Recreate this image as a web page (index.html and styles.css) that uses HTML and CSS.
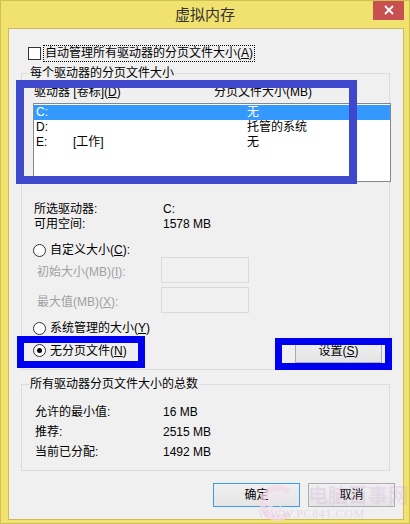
FILE: index.html
```html
<!DOCTYPE html>
<html lang="zh-CN">
<head>
<meta charset="utf-8">
<title>虚拟内存</title>
<link rel="stylesheet" href="styles.css">
</head>
<body>
<div class="window">
  <div class="titlebar">
    <span></span>
    <span class="title">虚拟内存</span>
    <span class="close-wrap">
      <span class="close">
        <svg width="10" height="10" viewBox="0 0 10 10"><path d="M1 1 L9 9 M9 1 L1 9" stroke="#fff" stroke-width="1.8" fill="none"/></svg>
      </span>
    </span>
  </div>
  <div class="client">
    <div class="auto-row">
      <span class="checkbox"></span>
      <span class="focus-label">自动管理所有驱动器的分页文件大小(<u>A</u>)</span>
    </div>

    <div class="group group1">
      <div class="legend">每个驱动器的分页文件大小</div>
      <div class="list-header"><span>驱动器 [卷标](<u>D</u>)</span><span>分页文件大小(MB)</span></div>
      <div class="listview">
        <div class="lv-row selected"><span>C:</span><span></span><span>无</span></div>
        <div class="lv-row"><span>D:</span><span></span><span>托管的系统</span></div>
        <div class="lv-row"><span>E:</span><span>[工作]</span><span>无</span></div>
      </div>
      <div class="info">
        <div class="info-row"><span>所选驱动器:</span><span>C:</span></div>
        <div class="info-row"><span>可用空间:</span><span>1578 MB</span></div>
      </div>
      <div class="radio-row radio-custom">
        <span class="radio"></span><span>自定义大小(<u>C</u>):</span>
      </div>
      <div class="size-row">
        <span class="lbl">初始大小(MB)(<u>I</u>):</span><span class="size-input"></span>
      </div>
      <div class="size-row second">
        <span class="lbl">最大值(MB)(<u>X</u>):</span><span class="size-input"></span>
      </div>
      <div class="radio-row radio-sys">
        <span class="radio"></span><span>系统管理的大小(<u>Y</u>)</span>
      </div>
      <div class="bottom-row">
        <div class="radio-row">
          <span class="radio checked"></span><span>无分页文件(<u>N</u>)</span>
        </div>
        <span class="btn">设置(<u>S</u>)</span>
      </div>
    </div>

    <div class="group group2">
      <div class="legend">所有驱动器分页文件大小的总数</div>
      <div class="totals">
        <div class="total-row"><span>允许的最小值:</span><span>16 MB</span></div>
        <div class="total-row"><span>推荐:</span><span>2515 MB</span></div>
        <div class="total-row"><span>当前已分配:</span><span>1492 MB</span></div>
      </div>
    </div>

    <div class="dialog-buttons">
      <span class="btn dlg default">确定</span>
      <span class="btn dlg">取消</span>
    </div>
  </div>

  <div class="mark mark-a"></div>
  <div class="mark mark-b"></div>
  <div class="mark mark-c"></div>

  <div class="wm-logo">
    <svg width="44" height="38" viewBox="0 0 44 38">
      <path d="M34 9 A15 15 0 1 0 34 29" stroke="#f4d9e8" stroke-width="6" fill="none"/>
      <path d="M27 15 A7 7 0 1 0 27 23" stroke="#f6e2ee" stroke-width="4" fill="none"/>
    </svg>
  </div>
  <div class="wm-text">电脑百事网</div>
  <div class="wm-url">WWW.PC841.COM</div>
</div>
</body>
</html>
```

FILE: styles.css
```css
* { box-sizing: border-box; }
html, body { margin: 0; padding: 0; }
body {
  font-family: "Liberation Sans", "Noto Sans CJK SC", sans-serif;
  font-size: 12px;
  color: #000;
}
u { text-decoration: underline; text-underline-offset: 1px; }

.window {
  position: relative;
  width: 410px;
  height: 524px;
  background: #f1e26f;
  border: 1px solid #d0bf52;
  display: flex;
  flex-direction: column;
  overflow: hidden;
}

.titlebar {
  height: 27px;
  flex: none;
  display: grid;
  grid-template-columns: 1fr auto 1fr;
  align-items: start;
}
.title {
  font-size: 15px;
  line-height: 27px;
  color: #333;
}
.close-wrap {
  display: flex;
  justify-content: flex-end;
  padding-right: 5px;
}
.close {
  width: 31px;
  height: 20px;
  margin-top: -1px;
  background: #c75050;
  display: flex;
  align-items: center;
  justify-content: center;
}

.client {
  flex: 1;
  margin: 0 5px 3px 7px;
  background: #f0f0f0;
  border: 1px solid #cdbc55;
}

.auto-row {
  display: flex;
  align-items: center;
  height: 17px;
  margin-top: 16px;
  padding-left: 19px;
}
.checkbox {
  width: 13px;
  height: 13px;
  border: 1px solid #333;
  background: #fff;
}
.focus-label {
  margin-left: 2px;
  height: 17px;
  line-height: 15px;
  padding: 0 1px;
  border: 1px dotted #000;
}

.group {
  border: 1px solid #dcdcdc;
  margin-left: 12px;
  margin-right: 13px;
}
.group1 { margin-top: 11px; padding-bottom: 6px; }
.group2 { margin-top: 14px; padding-bottom: 8px; }

.legend {
  display: block;
  width: max-content;
  margin: -8px 0 0 7px;
  padding: 0 1px;
  height: 14px;
  line-height: 14px;
  background: #f0f0f0;
}

.list-header {
  display: grid;
  grid-template-columns: 180px auto;
  margin-top: 5px;
  padding-left: 12px;
  height: 14px;
  line-height: 14px;
}
.listview {
  margin: 4px 0 0 11px;
  width: 358px;
  height: 79px;
  border: 1px solid #828790;
  background: #fff;
  padding-top: 1px;
}
.lv-row {
  display: grid;
  grid-template-columns: 37px 174px 1fr;
  height: 15px;
  line-height: 15px;
  padding-left: 2px;
}
.lv-row.selected { background: #3399ff; color: #fff; }

.info { margin-top: 20px; padding-left: 12px; }
.info-row {
  display: grid;
  grid-template-columns: 129px auto;
  height: 15px;
  line-height: 15px;
}

.radio-row {
  display: flex;
  align-items: center;
  gap: 4px;
  height: 14px;
  line-height: 14px;
}
.radio-custom { margin-top: 11px; padding-left: 11px; }
.radio-sys { margin-top: 8px; padding-left: 11px; }
.radio {
  width: 13px;
  height: 13px;
  border: 1px solid #333;
  border-radius: 50%;
  background: #fff;
  display: flex;
  align-items: center;
  justify-content: center;
}
.radio.checked::after {
  content: "";
  width: 5px;
  height: 5px;
  border-radius: 50%;
  background: #000;
}

.size-row {
  display: flex;
  align-items: center;
  height: 26px;
  padding-left: 15px;
  color: #a0a0a0;
}
.size-row.second { margin-top: 4px; }
.size-row .lbl { width: 124px; }
.size-input {
  width: 88px;
  height: 26px;
  border: 1px solid #d9d9d9;
  background: #f0f0f0;
}

.bottom-row {
  display: flex;
  justify-content: space-between;
  align-items: center;
  height: 25px;
  margin-top: 3px;
  padding: 0 7px 0 11px;
}

.btn {
  width: 87px;
  height: 25px;
  border: 1px solid #acacac;
  background: linear-gradient(#f0f0f0, #e5e5e5);
  display: flex;
  align-items: center;
  justify-content: center;
  line-height: 14px;
}
.btn.dlg { height: 24px; }
.btn.default { border-color: #3c9cf0; }

.totals { margin-top: 11px; padding-left: 13px; }
.total-row {
  display: grid;
  grid-template-columns: 128px auto;
  height: 20px;
  line-height: 20px;
}

.dialog-buttons {
  display: flex;
  justify-content: flex-end;
  gap: 8px;
  margin-top: 12px;
  padding-right: 8px;
}

/* annotation rectangles drawn over the dialog */
.mark { position: absolute; }
.mark-a {
  left: 15px; top: 79px;
  width: 341px; height: 104px;
  border: 8px solid #3f48cc;
}
.mark-b {
  left: 16px; top: 335px;
  width: 128px; height: 32px;
  border: 7px solid #0000f0;
}
.mark-c {
  left: 274px; top: 337px;
  width: 117px; height: 32px;
  border: 7px solid #0000f0;
}

/* faint watermark */
.wm-logo {
  position: absolute;
  left: 254px; top: 483px;
  opacity: 0.7;
}
.wm-text {
  position: absolute;
  left: 307px; top: 482px;
  font-family: "Noto Sans CJK SC", sans-serif;
  font-size: 20px;
  line-height: 24px;
  font-weight: bold;
  color: rgba(205, 150, 225, 0.22);
}
.wm-url {
  position: absolute;
  left: 257px; top: 507px;
  font-family: "Liberation Serif", serif;
  font-size: 12px;
  line-height: 13px;
  letter-spacing: 0.6px;
  color: rgba(210, 180, 225, 0.4);
}
```
